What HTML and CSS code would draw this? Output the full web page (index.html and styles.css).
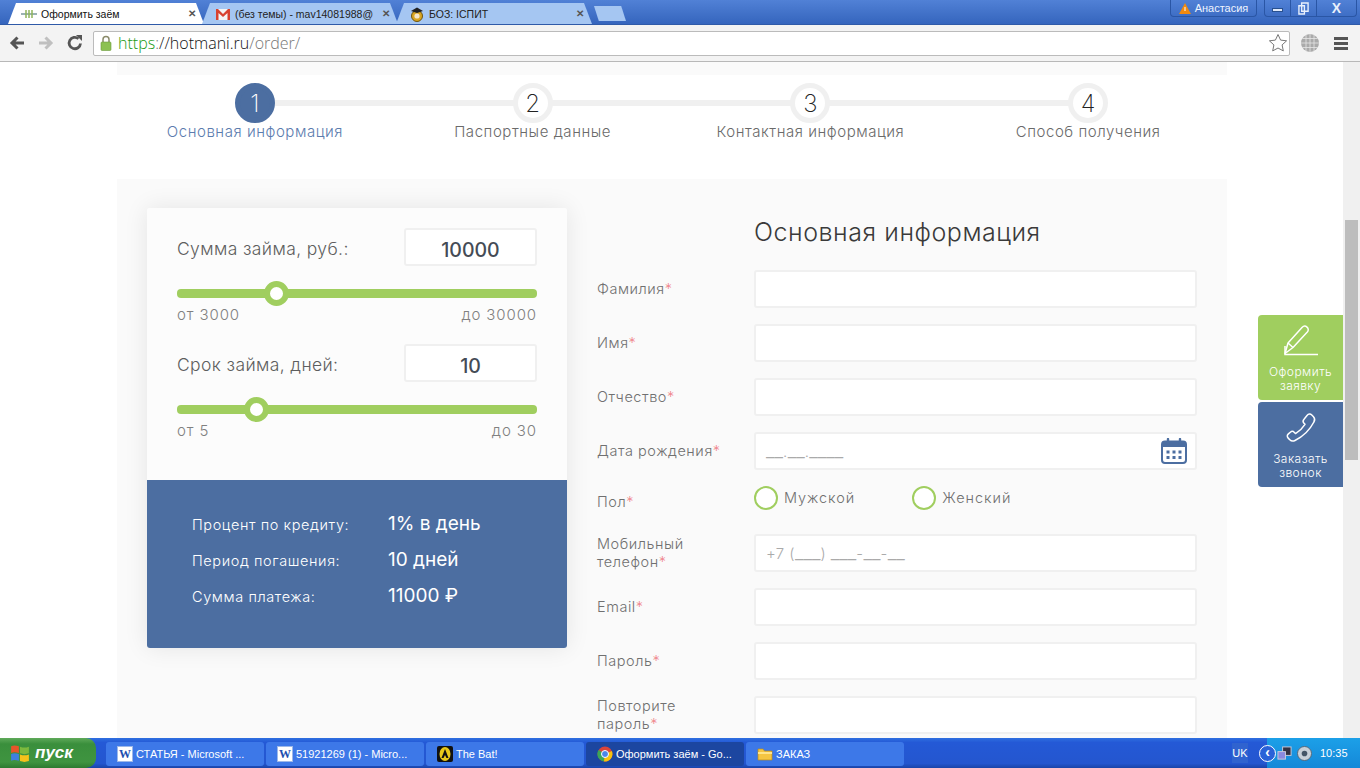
FILE: index.html
```html
<!DOCTYPE html>
<html lang="ru">
<head>
<meta charset="utf-8">
<title>Оформить заём</title>
<link rel="stylesheet" href="styles.css">
</head>
<body>
<div class="window">
  <header class="titlebar">
    <div class="tabs">
      <div class="tab tab-active">
        <svg class="tab-icon" viewBox="0 0 16 16"><path d="M0 8h16" stroke="#7a9a9a" stroke-width="1.5"/><path d="M5 4v8M8 4v8M11 4v8" stroke="#8fb45a" stroke-width="1.5"/></svg>
        <span class="tab-title">Оформить заём</span><span class="tab-x">✕</span>
      </div>
      <div class="tab">
        <svg class="tab-icon" viewBox="0 0 16 16"><rect x="1" y="3" width="14" height="11" fill="#f4f4f4"/><path d="M1 14V3h2l5 5 5-5h2v11h-2.500V7L8 11 3.500 7v7z" fill="#d8412f"/></svg>
        <span class="tab-title">(без темы) - mav14081988@</span><span class="tab-x">✕</span>
      </div>
      <div class="tab">
        <svg class="tab-icon" viewBox="0 0 16 16"><circle cx="8" cy="10" r="5.500" fill="#d9a520" stroke="#6d5410"/><circle cx="8" cy="10" r="2.600" fill="#f5e6c8"/><path d="M2 5l6-3.500L14 5 8 7z" fill="#222"/></svg>
        <span class="tab-title">БОЗ: ІСПИТ</span><span class="tab-x">✕</span>
      </div>
      <div class="tab-new"></div>
    </div>
    <div class="window-actions">
      <div class="user-badge">
        <svg class="warn" viewBox="0 0 12 11"><path d="M6 0l6 11H0z" fill="#f08a10"/><path d="M5.500 4h1v4h-1z" fill="#fff"/></svg>
        <span>Анастасия</span>
      </div>
      <div class="win-buttons">
        <span class="win-btn"><i class="win-min"></i></span>
        <span class="win-btn"><svg viewBox="0 0 12 14"><path d="M4 1h7v9H4zM1 4h6v9H1z" fill="none" stroke="#e8f0fc" stroke-width="1.500"/></svg></span>
        <span class="win-btn win-close">X</span>
      </div>
    </div>
  </header>

  <nav class="toolbar">
    <svg class="nav-icon" viewBox="0 0 18 18"><path d="M16 9H5M9.500 3.500L4 9l5.500 5.500" fill="none" stroke="#555" stroke-width="3"/></svg>
    <svg class="nav-icon" viewBox="0 0 18 18"><path d="M2 9h11M8.500 3.500L14 9l-5.500 5.500" fill="none" stroke="#c0c0c0" stroke-width="3"/></svg>
    <svg class="nav-icon" viewBox="0 0 18 18"><path d="M14.500 9.500A5.700 5.700 0 1 1 12.500 4.700" fill="none" stroke="#555" stroke-width="2.800"/><path d="M10 1h6v6z" fill="#555"/></svg>
    <div class="omnibox">
      <svg class="lock" viewBox="0 0 12 16"><path d="M3 7V4.500a3 3 0 0 1 6 0V7" fill="none" stroke="#8a8a6a" stroke-width="1.500"/><rect x="1" y="7" width="10" height="8.500" rx="1" fill="#8cc152" stroke="#6c9a3c" stroke-width=".6"/></svg>
      <span class="url"><span class="url-https">https</span><span class="url-dim">:</span>//<span class="url-host">hotmani.ru</span><span class="url-dim">/order/</span></span>
      <svg class="star" viewBox="0 0 20 20"><path d="M10 1.500l2.600 5.600 6 .7-4.500 4.100 1.200 6L10 15l-5.300 2.900 1.200-6L1.400 7.800l6-.7z" fill="#fff" stroke="#777" stroke-width="1"/></svg>
    </div>
    <svg class="globe" viewBox="0 0 20 20"><circle cx="10" cy="10" r="9" fill="#aaa"/><path d="M1 10h18M2.500 5.500h15M2.500 14.500h15M10 1v18M6 2v16M14 2v16" stroke="#e6e6e6" stroke-width=".8" fill="none"/></svg>
    <div class="menu-icon"><i></i><i></i><i></i></div>
  </nav>

  <div class="viewport">
    <main class="page">
      <div class="strip"></div>
      <ol class="steps">
        <li class="step step-current"><span class="step-num">1</span><span class="step-label">Основная информация</span></li>
        <li class="step"><span class="step-num">2</span><span class="step-label">Паспортные данные</span></li>
        <li class="step"><span class="step-num">3</span><span class="step-label">Контактная информация</span></li>
        <li class="step step-last"><span class="step-num">4</span><span class="step-label">Способ получения</span></li>
      </ol>
      <section class="panel">
        <aside class="calc">
          <div class="calc-top">
            <div class="calc-row"><span class="calc-label">Сумма займа, руб.:</span><span class="calc-value">10000</span></div>
            <div class="slider"><span class="thumb thumb-sum"></span></div>
            <div class="range"><span>от 3000</span><span>до 30000</span></div>
            <div class="calc-row calc-row-2"><span class="calc-label">Срок займа, дней:</span><span class="calc-value">10</span></div>
            <div class="slider"><span class="thumb thumb-term"></span></div>
            <div class="range"><span>от 5</span><span>до 30</span></div>
          </div>
          <dl class="summary">
            <div class="summary-row"><dt>Процент по кредиту:</dt><dd>1% в день</dd></div>
            <div class="summary-row"><dt>Период погашения:</dt><dd>10 дней</dd></div>
            <div class="summary-row"><dt>Сумма платежа:</dt><dd>11000 ₽</dd></div>
          </dl>
        </aside>
        <form class="form">
          <h2 class="form-title">Основная информация</h2>
          <div class="field"><label class="field-label">Фамилия<em>*</em></label><div class="input"></div></div>
          <div class="field"><label class="field-label">Имя<em>*</em></label><div class="input"></div></div>
          <div class="field"><label class="field-label">Отчество<em>*</em></label><div class="input"></div></div>
          <div class="field"><label class="field-label">Дата рождения<em>*</em></label>
            <div class="input input-date"><span class="mask"><b>__</b>.<b>__</b>.<b>____</b></span>
              <svg class="cal" viewBox="0 0 26 26"><rect x="1" y="3.500" width="24" height="21.500" rx="3" fill="none" stroke="#4c6ea1" stroke-width="2"/><path d="M1 5.500a2.500 2.500 0 0 1 2.500-2.500h19A2.500 2.500 0 0 1 25 5.500V9H1z" fill="#4c6ea1"/><path d="M7 1v5M19 1v5" stroke="#4c6ea1" stroke-width="2.400" stroke-linecap="round"/><path d="M5.500 12.500h3v3h-3zM11.500 12.500h3v3h-3zM17.500 12.500h3v3h-3zM5.500 18h3v3h-3zM11.500 18h3v3h-3zM17.500 18h3v3h-3z" fill="#4c6ea1"/></svg>
            </div>
          </div>
          <div class="field field-radio"><label class="field-label">Пол<em>*</em></label>
            <div class="radios">
              <span class="radio"><i></i>Мужской</span>
              <span class="radio"><i></i>Женский</span>
            </div>
          </div>
          <div class="field"><label class="field-label">Мобильный телефон<em>*</em></label><div class="input"><span class="mask">+7 (<b>___</b>) <b>___</b>-<b>__</b>-<b>__</b></span></div></div>
          <div class="field"><label class="field-label">Email<em>*</em></label><div class="input"></div></div>
          <div class="field"><label class="field-label">Пароль<em>*</em></label><div class="input"></div></div>
          <div class="field"><label class="field-label">Повторите пароль<em>*</em></label><div class="input"></div></div>
        </form>
      </section>
    </main>
    <div class="side">
      <a class="side-btn side-green">
        <svg viewBox="0 0 36 32"><path d="M2 28.500L5 18 19 2.500c1.500-1.600 3.500-1.700 5-.4s1.700 3.400.3 5L10 22.500z" fill="none" stroke="#fff" stroke-width="1.500" stroke-linejoin="round"/><path d="M5 18l5 4.500M2 21v8.500h33" fill="none" stroke="#fff" stroke-width="1.500"/></svg>
        <span>Оформить заявку</span>
      </a>
      <a class="side-btn side-blue">
        <svg viewBox="0 0 32 32"><path d="M22 3.500c1.500-1.700 3.300-1.900 4.800-.5l1.700 1.700c1.400 1.500 1.500 3.400.4 5.300C25 17.500 18 24.500 10 28.500c-2 1-3.800.7-5.200-.7l-1.400-1.400c-1.500-1.500-1.500-3.100 0-4.500l1.900-1.700c1.400-1.200 2.900-1.100 4.100.2l1.100 1.200c3.800-2.200 7-5.400 9.500-9.300l-1-1.100c-1.200-1.400-1.200-2.800 0-4z" fill="none" stroke="#fff" stroke-width="1.500" stroke-linejoin="round"/></svg>
        <span>Заказать звонок</span>
      </a>
    </div>
    <div class="scrollbar"><div class="scroll-thumb"></div></div>
  </div>

  <footer class="taskbar">
    <div class="start">
      <svg class="xp-flag" viewBox="0 0 18 18"><path d="M1 3c2-1 4-1 7 0v6c-3-1-5-1-7 0z" fill="#e8552a"/><path d="M9 3.300c3 1 5 1 8 0v6c-3 1-5 1-8 0z" fill="#7cb93e"/><path d="M1 10c2-1 4-1 7 0v6c-3-1-5-1-7 0z" fill="#3f7fe0"/><path d="M9 10.300c3 1 5 1 8 0v6c-3 1-5 1-8 0z" fill="#f5c21b"/></svg>
      <span>пуск</span>
    </div>
    <div class="task-items">
      <div class="task"><span class="word-icon">W</span><span class="task-text">СТАТЬЯ - Microsoft ...</span></div>
      <div class="task"><span class="word-icon">W</span><span class="task-text">51921269 (1) - Micro...</span></div>
      <div class="task"><svg class="task-icon" viewBox="0 0 16 16"><rect width="16" height="16" rx="2" fill="#111"/><ellipse cx="8" cy="8" rx="5.500" ry="7" fill="#e8c81a"/><path d="M8 3L4.500 12h2l1.500-3 1.500 3h2z" fill="#111"/></svg><span class="task-text">The Bat!</span></div>
      <div class="task task-active"><svg class="task-icon" viewBox="0 0 16 16"><circle cx="8" cy="8" r="7.500" fill="#d9443a"/><path d="M8 8L1.500 4A7.500 7.500 0 0 0 7 15.400z" fill="#3aa757"/><path d="M8 8l6.900-2.900A7.500 7.500 0 0 1 7 15.400z" fill="#f6c20e"/><circle cx="8" cy="8" r="3.500" fill="#4a86e8" stroke="#fff"/></svg><span class="task-text">Оформить заём - Go...</span></div>
      <div class="task"><svg class="task-icon" viewBox="0 0 16 16"><path d="M1 3h5l1.500 2H15v9H1z" fill="#f5c542" stroke="#b98a1c" stroke-width=".7"/><path d="M1 6h14v2H1z" fill="#ffe48a"/></svg><span class="task-text">ЗАКАЗ</span></div>
    </div>
    <span class="lang">UK</span>
    <div class="tray">
      <span class="tray-chevron">‹</span>
      <svg class="tray-icon" viewBox="0 0 16 16"><rect x="6" y="1" width="9" height="9" fill="#334" stroke="#ccd"/><rect x="1" y="6" width="8" height="8" fill="#8a8ae0" stroke="#ccd"/></svg>
      <svg class="tray-icon" viewBox="0 0 16 16"><circle cx="8" cy="8" r="7.500" fill="#c8d0d8" stroke="#567"/><circle cx="8" cy="8" r="3" fill="#456"/></svg>
      <span class="clock">10:35</span>
    </div>
  </footer>
</div>
</body>
</html>
```
FILE: styles.css
```css
* { box-sizing: border-box; }
html, body { margin: 0; height: 100%; overflow: hidden; }
body { font-family: Inter, "Noto Sans", sans-serif; }
.window { width: 1360px; height: 768px; display: flex; flex-direction: column; overflow: hidden; }

/* browser chrome */
.titlebar { height: 25px; flex: none; display: flex; justify-content: space-between; background: linear-gradient(#5181d6, #3565bd); border-bottom: 1px solid #2f5aa8; font-family: "Liberation Sans", sans-serif; }
.tabs { display: flex; padding: 3px 0 0 8px; align-items: stretch; }
.tab { width: 196px; margin-right: -2px; padding: 0 8px 0 13px; display: flex; align-items: center; gap: 4px; font-size: 10.500px; color: #222; background: #a5c6f2; clip-path: polygon(0 100%, 8px 0, calc(100% - 8px) 0, 100% 100%); white-space: nowrap; }
.tab-active { background: #fff; color: #111; }
.tab-icon { width: 16px; height: 16px; flex: none; }
.tab-title { flex: 1; overflow: hidden; }
.tab-x { color: #555; font-size: 10px; font-weight: 700; }
.tab-new { width: 32px; height: 15px; margin: 3px 0 0 4px; background: #a5c6f2; clip-path: polygon(0 0, 85% 0, 100% 100%, 15% 100%); }
.window-actions { display: flex; padding-right: 3px; gap: 7px; }
.user-badge { width: 87px; height: 17px; display: flex; align-items: center; justify-content: center; gap: 4px; color: #eef4ff; font-size: 11px; border: 1px solid #2a56a5; border-top: 0; border-radius: 0 0 4px 4px; }
.warn { width: 12px; height: 11px; }
.win-buttons { width: 93px; height: 17px; display: flex; border: 1px solid #2a56a5; border-top: 0; border-radius: 0 0 4px 4px; }
.win-btn { flex: 1; display: flex; align-items: center; justify-content: center; border-right: 1px solid #2a56a5; }
.win-btn svg { width: 11px; height: 13px; }
.win-btn:nth-child(1), .win-btn:nth-child(2) { flex: none; width: 26px; }
.win-min { width: 11px; height: 4px; margin-top: 4px; background: #dfe9fa; border: 1px solid #28508f; }
.win-close { border: 0; color: #e8f0fc; font-size: 14px; font-weight: 700; }

.toolbar { height: 37px; flex: none; display: flex; align-items: center; padding: 0 8px 0 8px; background: #f3f3f3; border-bottom: 1px solid #b8b8b8; }
.nav-icon { width: 18px; height: 18px; flex: none; margin-right: 11px; }
.omnibox { flex: none; width: 1197px; height: 25px; margin-left: -2px; display: flex; align-items: center; padding: 0 1px 0 6px; background: #fff; border: 1px solid #bbb; border-radius: 2px; }
.lock { width: 12px; height: 16px; flex: none; margin-right: 6px; }
.url { flex: 1; font: 300 16px "Open Sans", sans-serif; color: #222; }
.url-https { color: #1a9a14; }
.url-dim { color: #777; }
.url-host { color: #111; }
.star { width: 20px; height: 20px; }
.globe { width: 20px; height: 20px; flex: none; margin-left: 10px; }
.menu-icon { width: 14px; margin-left: 14px; display: flex; flex-direction: column; gap: 2px; }
.menu-icon i { height: 3px; background: #555; }

/* page */
.viewport { flex: 1; min-height: 0; position: relative; display: flex; background: #fff; overflow: hidden; }
.page { width: 1343px; flex: none; padding: 0 116px 0 117px; }
.strip { height: 13px; background: #fafafa; }
.steps { list-style: none; margin: 0 0 0 -1px; padding: 8px 0 0; height: 104px; display: grid; grid-template-columns: repeat(4, 1fr); }
.step { position: relative; display: flex; flex-direction: column; align-items: center; }
.step::after { content: ""; position: absolute; top: 17px; left: 50%; width: 100%; height: 6px; background: #f0f0f0; }
.step-last::after { display: none; }
.step-num { position: relative; z-index: 1; width: 40px; height: 40px; display: flex; align-items: center; justify-content: center; border: 5px solid #f0f0f0; border-radius: 50%; background: #fff; font-weight: 200; font-size: 24px; color: #222; }
.step-label { height: 18px; line-height: 18px; font-size: 15px; font-weight: 300; color: #6a6a6a; letter-spacing: .55px; white-space: nowrap; }
.step-current .step-num { background: #4c6ea1; border-color: #4c6ea1; color: #fff; }
.step-current .step-label { color: #5b7cae; }

.panel { display: flex; height: 700px; padding: 29px 30px 0; background: #fafafa; }
.calc { width: 420px; height: 440px; flex: none; border-radius: 3px; overflow: hidden; box-shadow: 0 0 25px rgba(0, 0, 0, .09); align-self: flex-start; display: flex; flex-direction: column; }
.calc-top { height: 272px; padding: 20px 30px 0; background: #fcfcfc; }
.calc-row { height: 38px; display: flex; justify-content: space-between; align-items: center; }
.calc-row-2 { margin-top: 20px; }
.calc-label { padding-top: 2px; font-size: 17.500px; font-weight: 300; color: #5e5e5e; letter-spacing: .38px; }
.calc-value { width: 133px; height: 38px; padding-top: 5px; display: flex; align-items: center; justify-content: center; background: #fff; border: 2px solid #f0f0f0; border-radius: 3px; font-weight: 500; font-size: 19.500px; color: #444b55; }
.slider { position: relative; height: 9px; margin-top: 23px; background: #a0ce5f; border-radius: 4px; }
.thumb { position: absolute; top: -8px; width: 25px; height: 25px; border: 6.500px solid #a0ce5f; border-radius: 50%; background: #fff; }
.thumb-sum { left: 87px; }
.thumb-term { left: 67px; }
.range { display: flex; justify-content: space-between; margin-top: 8px; font-size: 15px; line-height: 18px; font-weight: 300; color: #808080; letter-spacing: .9px; }

.summary { flex: 1; margin: 0; padding: 26px 45px 0; background: #4c6ea1; color: #fff; }
.summary-row { height: 36px; display: flex; align-items: center; }
.summary-row dt { width: 196px; font-size: 14.500px; font-weight: 300; letter-spacing: .6px; }
.summary-row dd { margin: 0 0 2px; font-size: 19px; font-weight: 400; }

.form { flex: 1; padding: 0 0 0 30px; }
.form-title { margin: 0 0 20px 157px; height: 42px; padding-top: 5px; display: flex; align-items: center; font-size: 25px; font-weight: 300; color: #3a3a3a; letter-spacing: .55px; white-space: nowrap; }
.field { height: 38px; margin-bottom: 16px; display: flex; align-items: center; }
.field-label { width: 157px; padding-right: 30px; font-size: 14.500px; line-height: 18px; font-weight: 300; color: #707070; letter-spacing: .55px; }
.field-label em { color: #ef8088; font-style: normal; }
.input { flex: 1; height: 38px; display: flex; align-items: center; justify-content: space-between; padding: 0 8px 0 10px; background: #fff; border: 2px solid #f0f0f0; border-radius: 3px; }
.mask { font-size: 15px; line-height: 18px; font-weight: 300; color: #aaa; letter-spacing: .4px; }
.mask b { font-size: 19px; line-height: 18px; font-weight: 300; letter-spacing: 0; }
.cal { width: 26px; height: 26px; }
.field-radio { height: 32px; margin-bottom: 16px; align-items: flex-start; }
.field-radio .field-label { padding-top: 7px; }
.radios { display: flex; gap: 57px; }
.radio { display: flex; align-items: center; gap: 6px; height: 24px; font-size: 14.500px; font-weight: 300; color: #707070; letter-spacing: .95px; line-height: 22px; }
.radio i { width: 24px; height: 24px; border: 2px solid #a0ce5f; border-radius: 50%; background: #fff; }

.side { position: absolute; top: 253px; left: 1258px; width: 85px; display: flex; flex-direction: column; gap: 2px; }
.side-btn { height: 85px; padding-top: 10px; display: flex; flex-direction: column; align-items: center; border-radius: 4px 0 0 4px; color: #fff; font-size: 12px; line-height: 14px; font-weight: 300; text-align: center; letter-spacing: .45px; }
.side-btn svg { width: 36px; height: 32px; margin-bottom: 8px; flex: none; }
.side-btn span { width: 74px; }
.side-green { background: #a0ce5f; }
.side-blue { background: #4c6ea1; }
.scrollbar { width: 17px; flex: none; padding: 158px 2px 0; background: #f0f0f0; }
.scroll-thumb { height: 240px; background: #bdbdbd; }

/* taskbar */
.taskbar { height: 30px; flex: none; display: flex; align-items: center; font-family: "Liberation Sans", sans-serif; color: #fff; background: linear-gradient(#2f6fe0 0, #2459d6 15%, #2456cf 85%, #1a44a8 100%); }
.start { width: 96px; height: 100%; display: flex; align-items: center; gap: 5px; padding-left: 10px; background: linear-gradient(#5faa5a, #3a8f3c 20%, #3f9440 80%, #2d7a30); border-radius: 0 10px 10px 0; font-size: 17px; font-style: italic; font-weight: 700; }
.xp-flag { width: 20px; height: 20px; }
.task-items { display: flex; gap: 2px; margin-left: 10px; }
.task { width: 158px; height: 24px; margin-top: 1px; display: flex; align-items: center; gap: 3px; padding-left: 11px; background: #3d78e8; border-radius: 3px; font-size: 11px; white-space: nowrap; }
.task-active { background: #1c46a0; }
.task-icon { width: 16px; height: 16px; flex: none; }
.word-icon { width: 16px; height: 16px; flex: none; background: #fff; color: #1f4fb0; border: 1px solid #9db8e8; font: 700 12px/14px "Liberation Serif", serif; text-align: center; }
.lang { margin-left: auto; margin-right: 19px; width: 16px; padding: 4px 0; text-align: center; font-size: 11px; background: #3063cf; }
.tray { width: 93px; height: 100%; display: flex; align-items: center; gap: 5px; background: linear-gradient(#1ca0e8, #1588d8); font-size: 11px; }
.tray-chevron { width: 17px; height: 17px; flex: none; margin: 0 -4px 0 -8px; border: 1px solid #fff; border-radius: 50%; background: #2a62d8; line-height: 13px; text-align: center; font-weight: 700; font-size: 14px; }
.tray-icon { width: 15px; height: 15px; flex: none; }
.clock { margin-left: 3px; }
```
